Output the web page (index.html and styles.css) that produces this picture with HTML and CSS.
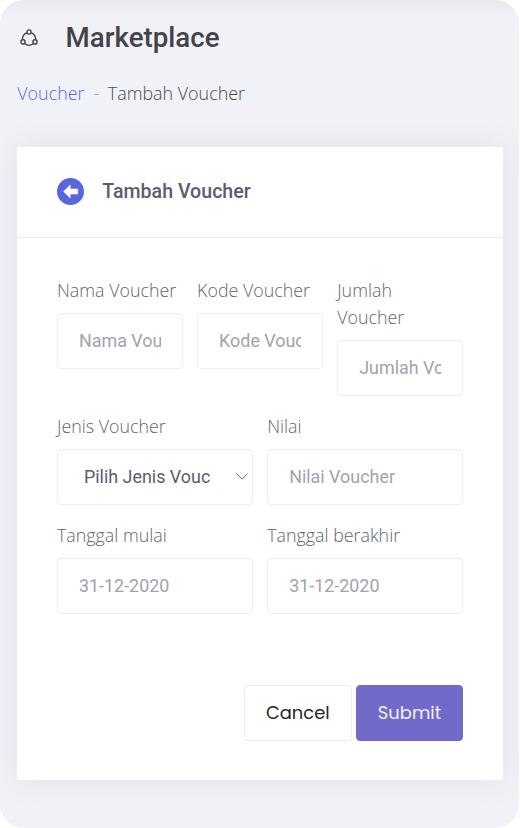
FILE: index.html
```html
<!DOCTYPE html>
<html lang="id">
<head>
<meta charset="utf-8">
<title>Marketplace</title>
<link rel="stylesheet" href="styles.css">
</head>
<body>
<main class="page">
  <header class="topbar">
    <svg class="network" viewBox="0 0 18 18" fill="none" stroke="currentColor" stroke-width="1.4">
      <circle cx="9" cy="3" r="2.1"/><circle cx="3" cy="12.9" r="2.1"/><circle cx="15" cy="12.9" r="2.1"/>
      <path d="M6.9 3.6Q2.2 5.6 2.4 10.8M11.1 3.6Q15.8 5.6 15.6 10.8M4.8 14.8Q9 18 13.2 14.8"/>
    </svg>
    <h1 class="title">Marketplace</h1>
  </header>
  <nav class="crumbs"><a class="crumb-link">Voucher</a><span class="dash">-</span><span>Tambah Voucher</span></nav>
  <section class="card">
    <div class="card-head">
      <svg class="back" viewBox="0 0 27 27"><circle cx="13.5" cy="13.5" r="13.5" fill="#5867dd"/><path d="M6.6 13.5L13.2 7V11H20.7V16H13.2V20Z" fill="#fff" stroke="#fff" stroke-width=".6" stroke-linejoin="round"/></svg>
      <h2 class="card-title">Tambah Voucher</h2>
    </div>
    <form class="form">
      <div class="row three">
        <label class="field"><span class="label">Nama Voucher</span><input class="input" placeholder="Nama Voucher"></label>
        <label class="field"><span class="label">Kode Voucher</span><input class="input" placeholder="Kode Voucher"></label>
        <label class="field"><span class="label">Jumlah Voucher</span><input class="input" placeholder="Jumlah Voucher"></label>
      </div>
      <div class="row two">
        <div class="field"><span class="label">Jenis Voucher</span>
          <div class="input select"><span class="value">Pilih Jenis Vouc</span><svg class="chevron" viewBox="0 0 12 7" fill="none" stroke="currentColor" stroke-width="1"><path d="M.5 .6L6 6.1L11.5 .6"/></svg></div>
        </div>
        <label class="field"><span class="label">Nilai</span><input class="input" placeholder="Nilai Voucher"></label>
      </div>
      <div class="row two">
        <label class="field"><span class="label">Tanggal mulai</span><input class="input" placeholder="31-12-2020"></label>
        <label class="field"><span class="label">Tanggal berakhir</span><input class="input" placeholder="31-12-2020"></label>
      </div>
      <div class="actions">
        <button class="btn cancel" type="button"><span>Cancel</span></button>
        <button class="btn submit" type="button"><span>Submit</span></button>
      </div>
    </form>
  </section>
</main>
</body>
</html>
```
FILE: styles.css
```css
* { box-sizing: border-box; }
body { margin: 0; background: #fff; font-family: Roboto, sans-serif; }
.page {
  width: 519px; height: 828px; padding: 18px 16.3px 0 17.3px; overflow: hidden;
  border-radius: 24px;
  background: linear-gradient(#e8e9ee, #f1f2f8 17px) #f1f2f8;
}
.topbar { display: flex; align-items: center; height: 40px; }
.network { width: 18px; height: 18px; margin-left: 2.7px; color: #434349; }
.title { margin: 0 0 0 27.6px; font-size: 27.7px; font-weight: 500; line-height: 40px; color: #434349; }
.crumbs {
  display: flex; height: 27px; margin-top: 22px;
  font: 300 17.9px/27px "Open Sans", sans-serif; color: #48494f;
}
.crumb-link { color: #5867dd; }
.dash { margin: 0 8.5px 0 9px; color: #959cb6; }
.card {
  height: 632.6px; margin-top: 40px; background: #fff;
  box-shadow: 0 0 30px 2px rgba(69, 65, 78, .08);
}
.card-head {
  display: flex; align-items: center; height: 91.3px; padding: 0 39.7px 1px;
  border-bottom: 1px solid #ebedf2;
}
.back { width: 27px; height: 27px; margin-top: -1px; }
.card-title { margin: 0 0 0 18.3px; font-size: 19.6px; font-weight: 500; color: #595d6e; }
.form { padding: 38.7px 39.4px 0 39.7px; }
.row { display: grid; gap: 14px; margin-bottom: 17.2px; }
.three { grid-template-columns: repeat(3, 1fr); }
.two { grid-template-columns: repeat(2, 1fr); }
.field { display: block; min-width: 0; }
.label {
  display: block; margin-bottom: 9.5px;
  font: 300 17.85px/27px "Open Sans", sans-serif; color: #646569;
}
.input {
  display: block; width: 100%; height: 55.3px; padding: 0 21px 1px;
  border: 1px solid #ebedf2; border-radius: 4px; background: #fff;
  font: 400 17.9px Roboto, sans-serif; color: #595d6e;
}
.input::placeholder { color: #a1a3ae; opacity: 1; }
.select { display: flex; align-items: center; justify-content: space-between; padding: 0 4.5px 1px 26px; }
.value { white-space: nowrap; }
.chevron { width: 12px; height: 7px; color: #68686d; }
.actions { display: flex; justify-content: flex-end; gap: 4px; margin-top: 71px; }
.btn {
  width: 108px; height: 56px; padding: 0 0 1px; border: 1px solid #ebedf2; border-radius: 4px;
  background: #fff; font: 400 17.9px Poppins, sans-serif; color: #212529;
}
.submit { width: 107.5px; border-color: #716aca; background: #716aca; color: #f3f2fb; }
```
